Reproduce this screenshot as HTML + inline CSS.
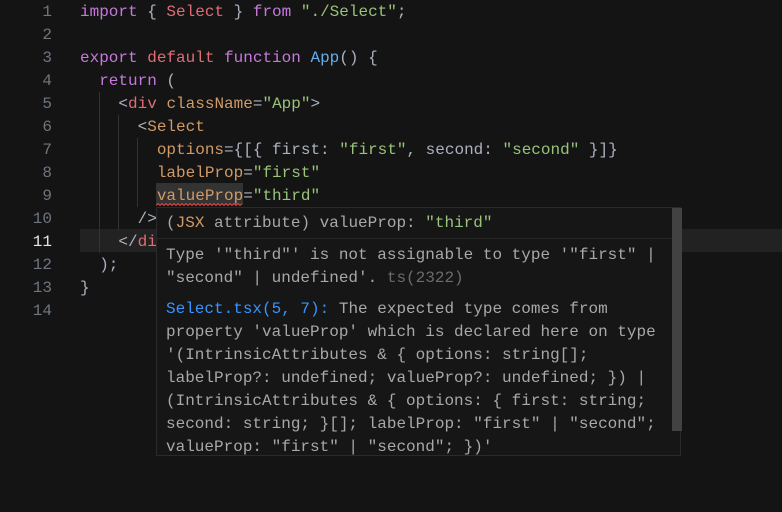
<!DOCTYPE html>
<html><head><meta charset="utf-8"><style>
html,body{margin:0;padding:0;background:#141414;width:782px;height:512px;overflow:hidden;position:relative}
.f{font-family:"Liberation Mono","DejaVu Sans Mono",monospace;}
.ln{position:absolute;left:0;width:52px;text-align:right;font-size:16px;color:#6e7681;line-height:23px}
.cl{position:absolute;left:80px;font-size:16px;line-height:23px;white-space:pre;color:#abb2bf}
.k{color:#c678dd}.r{color:#e06c75}.s{color:#98c379}.b{color:#61afef}.o{color:#d19a66}.p{color:#abb2bf}
.cur{position:absolute;left:80px;right:0;top:229px;height:23px;background:#222222}
.guide{position:absolute;width:1px;background:#333}
.tip{position:absolute;left:156px;top:207px;width:525px;height:249px;background:#161616;border:1px solid #2a2a2a;box-sizing:border-box}
.tl{position:absolute;left:9px;font-size:16px;line-height:23px;white-space:pre;color:#a8a8a8}
.wrap{position:absolute;left:0;top:1px;width:782px;height:512px}
</style></head><body class="f">
<div class="cur"></div>
<div class="guide" style="left:99px;top:92px;height:161px"></div>
<div class="guide" style="left:118px;top:115px;height:115px"></div>
<div class="guide" style="left:137px;top:138px;height:69px"></div>
<div style="position:absolute;left:156px;top:183px;width:87px;height:22px;background:#333"></div>
<svg style="position:absolute;left:156px;top:202px" width="87" height="5" viewBox="0 0 87 5"><path d="M0 3.5 L2 1.5 L4 3.5 L6 1.5 L8 3.5 L10 1.5 L12 3.5 L14 1.5 L16 3.5 L18 1.5 L20 3.5 L22 1.5 L24 3.5 L26 1.5 L28 3.5 L30 1.5 L32 3.5 L34 1.5 L36 3.5 L38 1.5 L40 3.5 L42 1.5 L44 3.5 L46 1.5 L48 3.5 L50 1.5 L52 3.5 L54 1.5 L56 3.5 L58 1.5 L60 3.5 L62 1.5 L64 3.5 L66 1.5 L68 3.5 L70 1.5 L72 3.5 L74 1.5 L76 3.5 L78 1.5 L80 3.5 L82 1.5 L84 3.5 L86 1.5" fill="none" stroke="#e0443e" stroke-width="1"/></svg>
<div class="wrap">
<div class="ln" style="top:0">1</div>
<div class="ln" style="top:23px">2</div>
<div class="ln" style="top:46px">3</div>
<div class="ln" style="top:69px">4</div>
<div class="ln" style="top:92px">5</div>
<div class="ln" style="top:115px">6</div>
<div class="ln" style="top:138px">7</div>
<div class="ln" style="top:161px">8</div>
<div class="ln" style="top:184px">9</div>
<div class="ln" style="top:207px">10</div>
<div class="ln" style="top:230px;color:#e6e6e6">11</div>
<div class="ln" style="top:253px">12</div>
<div class="ln" style="top:276px">13</div>
<div class="ln" style="top:299px">14</div>

<div class="cl" style="top:0"><span class="k">import</span> { <span class="r">Select</span> } <span class="k">from</span> <span class="s">"./Select"</span>;</div>
<div class="cl" style="top:46px"><span class="k">export</span> <span class="r">default</span> <span class="k">function</span> <span class="b">App</span>() {</div>
<div class="cl" style="top:69px">  <span class="k">return</span> (</div>
<div class="cl" style="top:92px">    &lt;<span class="r">div</span> <span class="o">className</span>=<span class="s">"App"</span>&gt;</div>
<div class="cl" style="top:115px">      &lt;<span class="o">Select</span></div>
<div class="cl" style="top:138px">        <span class="o">options</span>={[{ first: <span class="s">"first"</span>, second: <span class="s">"second"</span> }]}</div>
<div class="cl" style="top:161px">        <span class="o">labelProp</span>=<span class="s">"first"</span></div>
<div class="cl" style="top:184px">        <span class="o">valueProp</span>=<span class="s">"third"</span></div>
<div class="cl" style="top:207px">      /&gt;</div>
<div class="cl" style="top:230px">    &lt;/<span class="r">div</span>&gt;</div>
<div class="cl" style="top:253px">  );</div>
<div class="cl" style="top:276px">}</div>
</div>

<div class="tip">
  <div style="position:absolute;left:0;right:0;top:30px;height:1px;background:#262626"></div>
  <div style="position:absolute;left:515px;top:0;width:10px;height:223px;background:#424242"></div>
  <div class="tl" style="top:4px">(<span class="o">JSX</span> attribute) valueProp: <span class="s">"third"</span></div>
  <div class="tl" style="top:36px">Type '"third"' is not assignable to type '"first" |</div>
  <div class="tl" style="top:59px">"second" | undefined'. <span style="color:#6b6b6b">ts(2322)</span></div>
  <div class="tl" style="top:90px"><span style="color:#3794ff">Select.tsx(5, 7):</span> The expected type comes from</div>
  <div class="tl" style="top:113px">property 'valueProp' which is declared here on type</div>
  <div class="tl" style="top:136px">'(IntrinsicAttributes &amp; { options: string[];</div>
  <div class="tl" style="top:159px">labelProp?: undefined; valueProp?: undefined; }) |</div>
  <div class="tl" style="top:182px">(IntrinsicAttributes &amp; { options: { first: string;</div>
  <div class="tl" style="top:205px">second: string; }[]; labelProp: "first" | "second";</div>
  <div class="tl" style="top:228px">valueProp: "first" | "second"; })'</div>
</div>
</body></html>
